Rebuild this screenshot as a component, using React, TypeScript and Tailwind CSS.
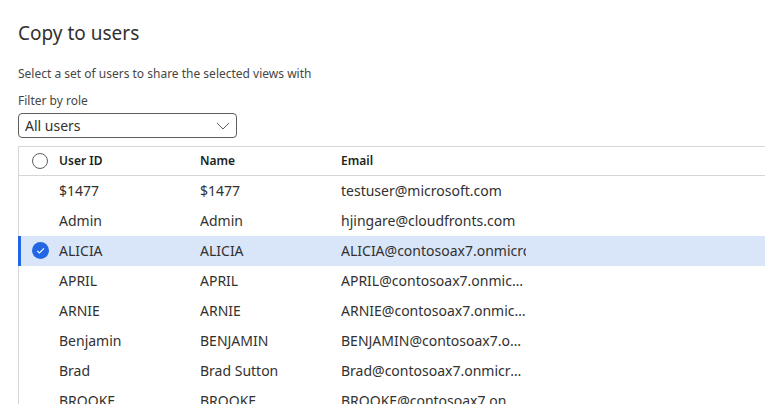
import React from "react";

const rows = [
  { id: "$1477", name: "$1477", email: "testuser@microsoft.com" },
  { id: "Admin", name: "Admin", email: "hjingare@cloudfronts.com" },
  { id: "ALICIA", name: "ALICIA", email: "ALICIA@contosoax7.onmicrosoft.com", selected: true },
  { id: "APRIL", name: "APRIL", email: "APRIL@contosoax7.onmicrosoft.com" },
  { id: "ARNIE", name: "ARNIE", email: "ARNIE@contosoax7.onmicrosoft.com" },
  { id: "Benjamin", name: "BENJAMIN", email: "BENJAMIN@contosoax7.onmicrosoft.com" },
  { id: "Brad", name: "Brad Sutton", email: "Brad@contosoax7.onmicrosoft.com" },
  { id: "BROOKE", name: "BROOKE", email: "BROOKE@contosoax7.onmicrosoft.com" },
];

export default function App() {
  return (
    <div
      className="w-[765px] h-[404px] overflow-hidden bg-white text-[#323130]"
      style={{ fontFamily: '"Noto Sans", "Open Sans", sans-serif' }}
    >
      <div className="pl-[18px] pt-[20px]">
        <h1 className="text-[19px] leading-[26px] font-normal text-[#323130]">Copy to users</h1>
        <p className="mt-[20px] text-[12px] leading-[16px] text-[#484644]">
          Select a set of users to share the selected views with
        </p>
        <div className="mt-[11px] text-[12px] leading-[16px] text-[#484644]">Filter by role</div>
        <div className="mt-[4px] w-[219px] h-[25px] border border-[#605e5c] rounded-[4px] flex items-center justify-between pl-[6px] pr-[6px]">
          <span className="text-[14px] text-[#323130]">All users</span>
          <svg width="14" height="8" viewBox="0 0 14 8" fill="none">
            <path d="M1 1l6 6 6-6" stroke="#605e5c" strokeWidth="1" />
          </svg>
        </div>
      </div>
      <div className="mt-[8px] ml-[18px] border-l border-t border-[#d6d6d6]">
        <div className="flex items-center h-[29px] border-b border-[#d6d6d6] text-[12px] font-semibold text-[#201f1e]">
          <div className="w-[40px] flex justify-center pl-[1px]">
            <span className="w-[16px] h-[16px] rounded-full border border-[#605e5c]" />
          </div>
          <div className="w-[141px]">User ID</div>
          <div className="w-[141px]">Name</div>
          <div>Email</div>
        </div>
        {rows.map((r) => (
          <div
            key={r.id}
            className={`flex items-center h-[30px] text-[14px] leading-[20px] pb-[1px] ${r.selected ? "bg-[#d9e5f9] border-l-[3px] border-[#2266e3] -ml-[1px]" : ""}`}
          >
            <div className={`${r.selected ? "w-[38px]" : "w-[40px]"} flex justify-center pl-[1px]`}>
              {r.selected && (
                <svg width="17" height="17" viewBox="0 0 17 17">
                  <circle cx="8.5" cy="8.5" r="8.5" fill="#2266e3" />
                  <path d="M5.2 8.8l2.2 2.2L12 6.4" stroke="#fff" strokeWidth="1.1" fill="none" />
                </svg>
              )}
            </div>
            <div className="w-[141px] whitespace-nowrap">{r.id}</div>
            <div className="w-[141px] whitespace-nowrap">{r.name}</div>
            <div
              className={`w-[185px] whitespace-nowrap overflow-hidden ${r.selected ? "" : "text-ellipsis"}`}
            >
              {r.email}
            </div>
          </div>
        ))}
      </div>
    </div>
  );
}
